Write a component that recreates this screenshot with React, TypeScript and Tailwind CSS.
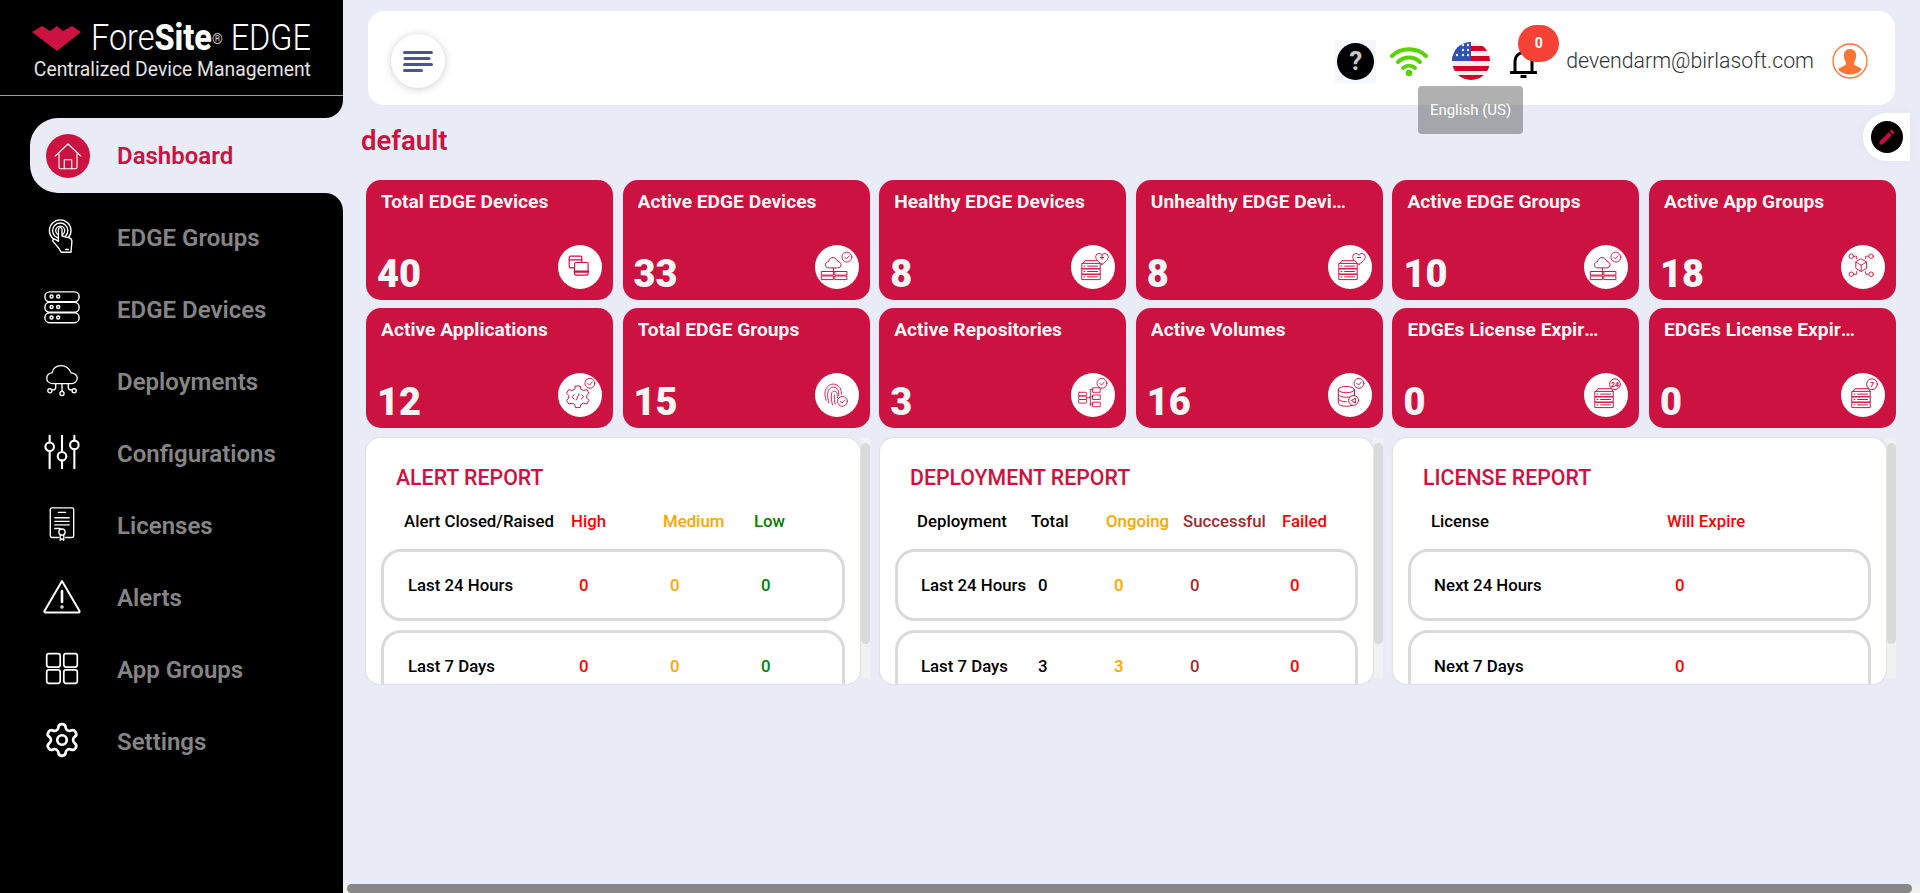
import { Settings } from "lucide-react";
import type { ReactNode } from "react";

function Svg({ size = 40, children, className }: { size?: number; children: ReactNode; className?: string }) {
  return (
    <svg
      width={size}
      height={size}
      viewBox="0 0 40 40"
      fill="none"
      stroke="currentColor"
      strokeWidth={1.5}
      strokeLinecap="round"
      strokeLinejoin="round"
      className={className}
    >
      {children}
    </svg>
  );
}

const HomeIcon = () => (
  <Svg size={30}>
    <path d="M3 20 20 4l17 16" />
    <path d="M8 17v18a2 2 0 0 0 2 2h20a2 2 0 0 0 2-2V17" />
    <path d="M15 37V25h10v12" />
  </Svg>
);
const TouchIcon = () => (
  <Svg size={36}>
    <circle cx="18" cy="14" r="12" />
    <circle cx="18" cy="14" r="8.5" />
    <circle cx="18" cy="14" r="5" />
    <path d="M16 33l-6-7c-1-2 1-3 3-2l3 2V13c0-3 4-3 4 0v7l8 2c2 .5 3 2 3 4l-1 12H19z" fill="#000" />
    <path d="M24 35h3" />
  </Svg>
);
const ServerIcon = () => (
  <Svg size={38}>
    <rect x="2" y="3" width="36" height="10.5" rx="5" />
    <rect x="2" y="14" width="36" height="10.5" rx="5" />
    <rect x="2" y="25" width="36" height="10.5" rx="5" />
    <circle cx="9" cy="8" r="1.6" />
    <circle cx="16" cy="8" r="1.6" />
    <circle cx="9" cy="19" r="1.6" />
    <circle cx="16" cy="19" r="1.6" />
    <circle cx="9" cy="30" r="1.6" />
    <circle cx="16" cy="30" r="1.6" />
  </Svg>
);
const CloudNetIcon = () => (
  <Svg size={36}>
    <path d="M10 24c-4 0-7-2.500-7-6s3-6 6-6c1-5 5-8 10-8s9 3 11 8c4 0 7 3 7 6s-3 6-7 6z" />
    <path d="M20 24v9M13 24v4a3 3 0 0 1-3 3H9M27 24v4a3 3 0 0 0 3 3h1" />
    <circle cx="6.500" cy="32" r="2.300" />
    <circle cx="20" cy="35" r="2.300" />
    <circle cx="33.500" cy="32" r="2.300" />
  </Svg>
);
const SlidersIcon = () => (
  <Svg size={38}>
    <g strokeWidth={2.2}>
      <path d="M7 3v7M7 19v18M20 3v17M20 29v8M33 3v5M33 17v20" />
      <circle cx="7" cy="14.500" r="4.500" />
      <circle cx="20" cy="24.500" r="4.500" />
      <circle cx="33" cy="12.500" r="4.500" />
    </g>
  </Svg>
);
const LicenseIcon = () => (
  <Svg size={36}>
    <path d="M16 35H9a2 2 0 0 1-2-2V4a2 2 0 0 1 2-2h22a2 2 0 0 1 2 2v29a2 2 0 0 1-2 2h-7" />
    <path d="M16 7h8M12 13h16M12 17h16M12 21h16M12 25h6" />
    <circle cx="20" cy="29" r="3.500" />
    <path d="M18 32v6l2-1.500 2 1.500v-6" />
  </Svg>
);
const AlertIcon = () => (
  <Svg>
    <path d="M20 5 2.500 35a1 1 0 0 0 1 1.500h33a1 1 0 0 0 1-1.500z" strokeWidth={2} />
    <path d="M20 15v11" strokeWidth={2.6} />
    <circle cx="20" cy="31" r=".6" strokeWidth={2.2} />
  </Svg>
);
const AppsIcon = () => (
  <Svg size={36}>
    <g strokeWidth={1.9}>
      <rect x="3" y="4" width="15" height="15" rx="2.500" />
      <rect x="22" y="4" width="15" height="15" rx="2.500" />
      <rect x="3" y="22" width="15" height="15" rx="2.500" />
      <rect x="22" y="22" width="15" height="15" rx="2.500" />
    </g>
  </Svg>
);

const NAV: { label: string; icon: ReactNode }[] = [
  { label: "EDGE Groups", icon: <TouchIcon /> },
  { label: "EDGE Devices", icon: <ServerIcon /> },
  { label: "Deployments", icon: <CloudNetIcon /> },
  { label: "Configurations", icon: <SlidersIcon /> },
  { label: "Licenses", icon: <LicenseIcon /> },
  { label: "Alerts", icon: <AlertIcon /> },
  { label: "App Groups", icon: <AppsIcon /> },
  { label: "Settings", icon: <Settings size={38} strokeWidth={1.7} /> },
];

// small badge in the top right of the card icons
const Check = ({ cx = 31, cy = 9 }: { cx?: number; cy?: number }) => (
  <g strokeWidth={1}>
    <circle cx={cx} cy={cy} r="5.500" fill="#fff" />
    <path d={`M${cx - 2.500} ${cy}l2 2 3.200-3.500`} />
  </g>
);
const Rack = ({ mark }: { mark: ReactNode }) => (
  <Svg size={36}>
    <g strokeWidth={1.1}>
      <path d="M9 16l2-3h15l2 3" />
      <rect x="8" y="16" width="20" height="6" />
      <rect x="8" y="22" width="20" height="6" />
      <rect x="8" y="28" width="20" height="6" />
      <path d="M14 19h11M14 25h11M14 31h11M10 19h1M10 25h1M10 31h1" />
      {mark}
    </g>
  </Svg>
);
const CloudRack = () => (
  <Svg size={36}>
    <g strokeWidth={1.1}>
      <path d="M11 21c-3 0-4-2-4-3.500S9 14 10.500 14c.5-3 3-4.500 5-4.500s4.500 1.500 5.500 4.500c2 0 3.500 1.500 3.500 3.500S23 21 21 21z" />
      <path d="M16 21v4M7 25h20" />
      <rect x="3" y="25" width="13" height="4" />
      <rect x="18" y="25" width="13" height="4" />
      <rect x="3" y="30" width="13" height="4" />
      <rect x="18" y="30" width="13" height="4" />
      <Check />
    </g>
  </Svg>
);
const WindowsIcon = () => (
  <Svg size={36}>
    <g strokeWidth={1.3}>
      <rect x="8" y="8" width="14" height="13" rx="1.500" />
      <path d="M8 12h14" />
      <rect x="14" y="15" width="15" height="14" rx="1.500" fill="#fff" />
      <path d="M14 25h15" strokeWidth={2.500} />
    </g>
  </Svg>
);
const HeartBadge = ({ plus }: { plus: boolean }) => (
  <g>
    <path d="M30 17c-5-3-7-6-7-8.500a3.700 3.700 0 0 1 7-1.500 3.700 3.700 0 0 1 7 1.500c0 2.500-2 5.500-7 8.500z" fill="#fff" />
    <path d={plus ? "M28 9.500h4M30 7.500v4" : "M28 9.500h4"} />
  </g>
);
const GearCode = () => (
  <Svg size={36}>
    <g strokeWidth={1.1}>
      <path d="M15 10h5l1 3.500 3 1.500 3.500-1 2.500 4-2.500 2.500v3l2.500 2.500-2.500 4-3.500-1-3 1.500-1 3.500h-5l-1-3.500-3-1.500-3.500 1-2.500-4 2.500-2.500v-3L5 18l2.500-4 3.500 1 3-1.500z" />
      <path d="M13.500 19.500l-2.500 2.500 2.500 2.500M21.500 19.500l2.500 2.500-2.500 2.500M19 18.500l-3 7" />
      <Check cx={31} cy={7} />
    </g>
  </Svg>
);
const FingerIcon = () => (
  <Svg size={36}>
    <g strokeWidth={1}>
      <path d="M8 26c-1-3-2-7-1-11 2-6 8-9 13-6 4 2 5 6 5 10" />
      <path d="M11 29c-1-4-2-9-1-13 1-4 6-6 9-4 3 2 3 6 3 9" />
      <path d="M15 31c-1-4-2-9-1-13 1-3 5-3 6 0 .5 2 .5 3 .5 5" />
      <path d="M18 30c-1-3-1-7-1-10" />
      <circle cx="26" cy="27" r="5.500" fill="#fff" />
      <path d="M23.500 27l2 2 3.200-3.500" />
    </g>
  </Svg>
);
const RepoIcon = () => (
  <Svg size={36}>
    <g strokeWidth={1}>
      <rect x="4" y="17" width="9" height="4" rx="1" />
      <rect x="4" y="21" width="9" height="4" rx="1" />
      <rect x="4" y="25" width="9" height="4" rx="1" />
      <path d="M13 23h4M17 14v18" />
      <rect x="20" y="12" width="8" height="5" />
      <rect x="20" y="20" width="8" height="5" />
      <rect x="20" y="28" width="8" height="5" />
      <path d="M17 14h3M17 22h3M17 30h3" />
      <Check cx={30} cy={7} />
    </g>
  </Svg>
);
const VolumeIcon = () => (
  <Svg size={36}>
    <g strokeWidth={1.1}>
      <ellipse cx="16" cy="14" rx="9" ry="3.500" />
      <path d="M7 14v15c0 2 4 3.500 9 3.500s9-1.500 9-3.500V14M7 19c0 2 4 3.500 9 3.500s9-1.500 9-3.500M7 24c0 2 4 3.500 9 3.500" />
      <circle cx="24" cy="26" r="5.500" fill="#fff" />
      <path d="M22 26l4-2.500v5z" />
      <Check cx={30} cy={7} />
    </g>
  </Svg>
);
const CubeNet = () => (
  <Svg size={36}>
    <g strokeWidth={1}>
      <path d="M18 11l6 3.500v7L18 25l-6-3.500v-7zM12 14.500l6 3.500 6-3.500M18 18v7" />
      <circle cx="7" cy="8" r="2.500" />
      <circle cx="29" cy="8" r="2.500" />
      <circle cx="7" cy="28" r="2.500" />
      <circle cx="29" cy="28" r="2.500" />
      <path d="M10 8h3v3M26 8h-3v3M10 28h3v-3M26 28h-3v-3" />
    </g>
  </Svg>
);
const countBadge = (n: string) => (
  <g>
    <circle cx="30" cy="8" r="6" fill="#fff" />
    <text x="30" y="11" textAnchor="middle" fontSize="8" fontWeight="700" stroke="none" fill="currentColor" fontFamily="Roboto, sans-serif">
      {n}
    </text>
  </g>
);

const CARDS: { title: string; value: number; icon: ReactNode }[] = [
  { title: "Total EDGE Devices", value: 40, icon: <WindowsIcon /> },
  { title: "Active EDGE Devices", value: 33, icon: <CloudRack /> },
  { title: "Healthy EDGE Devices", value: 8, icon: <Rack mark={<HeartBadge plus />} /> },
  { title: "Unhealthy EDGE Devices", value: 8, icon: <Rack mark={<HeartBadge plus={false} />} /> },
  { title: "Active EDGE Groups", value: 10, icon: <CloudRack /> },
  { title: "Active App Groups", value: 18, icon: <CubeNet /> },
  { title: "Active Applications", value: 12, icon: <GearCode /> },
  { title: "Total EDGE Groups", value: 15, icon: <FingerIcon /> },
  { title: "Active Repositories", value: 3, icon: <RepoIcon /> },
  { title: "Active Volumes", value: 16, icon: <VolumeIcon /> },
  { title: "EDGEs License Expiring in 24 Hours", value: 0, icon: <Rack mark={countBadge("24")} /> },
  { title: "EDGEs License Expiring in 7 Days", value: 0, icon: <Rack mark={countBadge("7")} /> },
];

function StatCard({ title, value, icon }: { title: string; value: number; icon: ReactNode }) {
  return (
    <div className="relative h-[120px] rounded-[15px] bg-[#cc1240] pt-[7px] pr-[36px] pl-[15px] text-[#f5f5f5]">
      <div className="truncate text-[19.2px] leading-[30px] font-bold">{title}</div>
      <div className="absolute bottom-[1px] left-[11px] text-[38px] leading-[50px] font-black">{value}</div>
      <div className="absolute right-[11px] bottom-[11px] flex h-[44px] w-[44px] items-center justify-center rounded-full bg-white text-[#cc1240]">
        {icon}
      </div>
    </div>
  );
}

type Col = { text: string; color: string };
const C = {
  black: "#000000",
  red: "#ff0000",
  orange: "#ffa500",
  green: "#008000",
  brown: "#a52a2a",
};

function ReportRow({ cols, grid }: { cols: Col[]; grid: string }) {
  return (
    <div className={`${grid} mb-[9px] h-[72px] shrink-0 items-center rounded-[20px] border-[3px] border-[#dadada] bg-white pt-[2px] text-[16.8px] font-medium`}>
      {cols.map((c, i) => (
        <span key={i} className="whitespace-nowrap" style={{ color: c.color }}>
          {c.text}
        </span>
      ))}
    </div>
  );
}

function Report({
  title,
  width,
  head,
  rows,
  headGrid,
  rowGrid,
}: {
  title: string;
  width: string;
  head: Col[];
  rows: Col[][];
  headGrid: string;
  rowGrid: string;
}) {
  return (
    <div className="flex h-[246px] items-start">
      <div className={`${width} h-full overflow-hidden rounded-[14px] bg-white px-[15px] pt-[20px] shadow-[0_0_2px_rgba(0,0,0,0.15)]`}>
        <div className="pl-[15px] text-[21.3px] leading-[40px] font-medium text-[#cc1240]">{title}</div>
        <div className={`${headGrid} mt-[4px] mb-[7px] h-[40px] items-center text-[16.8px] font-medium`}>
          {head.map((c, i) => (
            <span key={i} className="whitespace-nowrap" style={{ color: c.color }}>
              {c.text}
            </span>
          ))}
        </div>
        {rows.map((r, i) => (
          <ReportRow key={i} cols={r} grid={rowGrid} />
        ))}
      </div>
      <div className="ml-px h-[240px] w-[9px] bg-[#f1f1f1]">
        <div className="mt-[5px] h-[201px] rounded-[5px] bg-[#dadada]" />
      </div>
    </div>
  );
}

const bk = (text: string) => ({ text, color: C.black });
const rd = (text: string) => ({ text, color: C.red });
const or = (text: string) => ({ text, color: C.orange });
const gr = (text: string) => ({ text, color: C.green });
const br = (text: string) => ({ text, color: C.brown });

function Sidebar() {
  return (
    <aside className="relative flex w-[343px] shrink-0 flex-col bg-[#e9ebf7]">
      <div className="h-[118px] rounded-br-[18px] bg-black">
        <div className="h-[96px] border-b border-[#9a9a9a] pt-[20px] pl-[32px]">
          <div className="flex h-[36px] items-center">
            <svg width="49" height="25" viewBox="0 0 49 25" className="mr-[10px] shrink-0">
              <polygon points="0,6 10,0 18,5 25,0 31,5 40,0 49,6 25,25" fill="#cc1240" />
            </svg>
            <span className="inline-block origin-left scale-x-[0.9] text-[36px] leading-[36px] font-light whitespace-nowrap text-white">
              Fore<span className="font-extrabold">Site</span>
              <sup className="relative -top-[6px] text-[15px]">®</sup> EDGE
            </span>
          </div>
          <div className="mt-px origin-left scale-x-[0.92] pl-[2px] text-[21px] leading-[24px] whitespace-nowrap text-[#e2e2e2]">Centralized Device Management</div>
        </div>
      </div>
      <div className="bg-black">
        <div className="ml-[30px] flex h-[75px] items-center rounded-l-[28px] bg-[#e9ebf7] pl-[16px]">
          <div className="flex h-[44px] w-[44px] items-center justify-center rounded-full bg-[#cc1240] text-white">
            <HomeIcon />
          </div>
          <span className="ml-[27px] text-[24px] font-semibold text-[#cc1240]">Dashboard</span>
        </div>
      </div>
      <nav className="flex-1 rounded-tr-[18px] bg-black pt-[9px] text-[#858585]">
        {NAV.map((n) => (
          <div key={n.label} className="flex h-[72px] items-center pl-[42px]">
            <div className="flex w-[40px] -translate-y-[2px] justify-center text-white">{n.icon}</div>
            <span className="ml-[35px] text-[24px] font-semibold">{n.label}</span>
          </div>
        ))}
      </nav>
    </aside>
  );
}

function TopBar() {
  return (
    <div className="relative ml-[25px] flex h-[94px] w-[1527px] items-center rounded-[16px] bg-white pt-[6px] pr-[27px] pl-[23px]">
      <div className="flex h-[54px] w-[54px] flex-col items-center justify-center gap-[3px] rounded-full bg-white shadow-[0_1px_8px_rgba(0,0,0,0.2)]">
        <span className="h-[3px] w-[30px] rounded bg-[#4a5590]" />
        <span className="h-[3px] w-[27px] -translate-x-[1.5px] rounded bg-[#4a5590]" />
        <span className="h-[3px] w-[30px] rounded bg-[#4a5590]" />
        <span className="h-[3px] w-[20px] -translate-x-[5px] rounded bg-[#4a5590]" />
      </div>
      <div className="ml-auto flex items-center">
        <div className="flex h-[43px] w-[41px] items-center justify-center bg-[#f4f8fb]">
          <div className="flex h-[37px] w-[37px] items-center justify-center rounded-full bg-black text-[26px] leading-none font-bold text-[#c8c8c8]">?</div>
        </div>
        <svg width="38" height="30" viewBox="0 0 38 30" fill="none" stroke="#5ad100" strokeWidth="4" strokeLinecap="round" className="ml-[14px]">
          <path d="M2 10C11 1 27 1 36 10" />
          <path d="M8 16c6-6 16-6 22 0" />
          <path d="M13 22c3.500-3 8.500-3 12 0" />
          <circle cx="19" cy="27" r="1.300" fill="#5ad100" />
        </svg>
        <svg width="38" height="38" viewBox="0 0 38 38" className="ml-[24px] rounded-full">
          <rect width="38" height="38" fill="#f0f0f0" />
          <rect y="4" width="38" height="5" fill="#d80027" />
          <rect y="14" width="38" height="5" fill="#d80027" />
          <rect y="24" width="38" height="5" fill="#d80027" />
          <rect y="33" width="38" height="5" fill="#d80027" />
          <rect width="19" height="19" fill="#2e52b2" />
          <g fill="#f0f0f0">
            <circle cx="5" cy="13" r="1.200" />
            <circle cx="11" cy="13" r="1.200" />
            <circle cx="16" cy="13" r="1.200" />
            <circle cx="11" cy="8" r="1.200" />
            <circle cx="16" cy="8" r="1.200" />
            <circle cx="11" cy="3" r="1.200" />
            <circle cx="16" cy="3" r="1.200" />
          </g>
        </svg>
        <div className="relative ml-[20px]">
          <svg width="27" height="30" viewBox="0 0 27 30" fill="none" stroke="#000" strokeWidth="3" className="block translate-y-[3px]">
            <path d="M5 23V12a8.500 8.500 0 0 1 17 0v11" />
            <path d="M1 23.500h25" strokeLinecap="round" />
            <path d="M10.500 27.500h6" />
          </svg>
          <div className="absolute -top-[21px] left-[8px] flex h-[37px] w-[41px] items-center justify-center rounded-full bg-[#f44336] text-[14px] font-bold text-white">0</div>
        </div>
        <span className="ml-[29px] text-[21.3px] font-light text-[#333]">devendarm@birlasoft.com</span>
        <svg width="36" height="36" viewBox="0 0 36 36" className="ml-[18px]">
          <circle cx="18" cy="18" r="17" fill="#fff" stroke="#ff7433" strokeWidth="1.300" />
          <path d="M18 6c-5 0-6.500 4-6 8 .2 2 1 4 2 5.500v2c-2 2-6 2.500-8 5a17 17 0 0 0 24 0c-2-2.500-6-3-8-5v-2c1-1.500 1.800-3.500 2-5.500.5-4-1-8-6-8z" fill="#ff7433" />
        </svg>
      </div>
      <div className="absolute top-[75px] left-[1050px] flex h-[48px] w-[105px] items-center justify-center rounded-[4px] bg-[#616161]/50 text-[15px] text-white">English (US)</div>
    </div>
  );
}

export default function App() {
  return (
    <div className="flex h-[893px] w-[1920px] overflow-hidden bg-[#e9ebf7] font-['Roboto',sans-serif]">
      <Sidebar />
      <main className="relative flex min-w-0 flex-1 flex-col pt-[11px]">
        <TopBar />
        <div className="mt-[21px] ml-[18px] h-[30px] text-[27.5px] leading-[30px] font-semibold text-[#cc1240]">default</div>
        <div className="mt-[24px] ml-[23px] grid w-[1530px] grid-cols-6 gap-x-[9.600px] gap-y-[8px]">
          {CARDS.map((c) => (
            <StatCard key={c.title} {...c} />
          ))}
        </div>
        <div className="mt-[10px] ml-[23px] flex gap-[10px]">
          <Report
            title="ALERT REPORT"
            width="w-[494px]"
            headGrid="grid grid-cols-[167px_92px_91px_1fr] pl-[23px]"
            rowGrid="grid grid-cols-[171px_91px_91px_1fr] pl-[24px]"
            head={[bk("Alert Closed/Raised"), rd("High"), or("Medium"), gr("Low")]}
            rows={[
              [bk("Last 24 Hours"), rd("0"), or("0"), gr("0")],
              [bk("Last 7 Days"), rd("0"), or("0"), gr("0")],
            ]}
          />
          <Report
            title="DEPLOYMENT REPORT"
            width="w-[493px]"
            headGrid="grid grid-cols-[114px_75px_77px_99px_1fr] pl-[22px]"
            rowGrid="grid grid-cols-[117px_76px_76px_100px_1fr] pl-[23px]"
            head={[bk("Deployment"), bk("Total"), or("Ongoing"), br("Successful"), rd("Failed")]}
            rows={[
              [bk("Last 24 Hours"), bk("0"), or("0"), br("0"), rd("0")],
              [bk("Last 7 Days"), bk("3"), or("3"), br("0"), rd("0")],
            ]}
          />
          <Report
            title="LICENSE REPORT"
            width="w-[493px]"
            headGrid="grid grid-cols-[236px_1fr] pl-[23px]"
            rowGrid="grid grid-cols-[241px_1fr] pl-[23px]"
            head={[bk("License"), rd("Will Expire")]}
            rows={[
              [bk("Next 24 Hours"), rd("0")],
              [bk("Next 7 Days"), rd("0")],
            ]}
          />
        </div>
        {/* floating theme button */}
        <div className="absolute top-[113px] right-[10px] flex h-[48px] w-[47px] items-center justify-center rounded-l-[24px] bg-white shadow-[0_0_12px_rgba(0,0,0,0.04)]">
          <div className="flex h-[32px] w-[32px] items-center justify-center rounded-full bg-black">
            <svg width="20" height="20" viewBox="0 0 24 24" fill="#c01040">
              <path d="M3 17.250V21h3.750L17.810 9.940l-3.750-3.750L3 17.250zM20.710 7.040a1 1 0 0 0 0-1.410l-2.340-2.340a1 1 0 0 0-1.410 0l-1.830 1.830 3.750 3.750 1.830-1.830z" />
            </svg>
          </div>
        </div>
        {/* horizontal scrollbar */}
        <div className="absolute right-0 bottom-0 left-0 h-[9px] bg-[#f1f1f1] pr-[8px] pl-[4px]">
          <div className="h-full rounded-[5px] bg-[#888888]" />
        </div>
      </main>
    </div>
  );
}
